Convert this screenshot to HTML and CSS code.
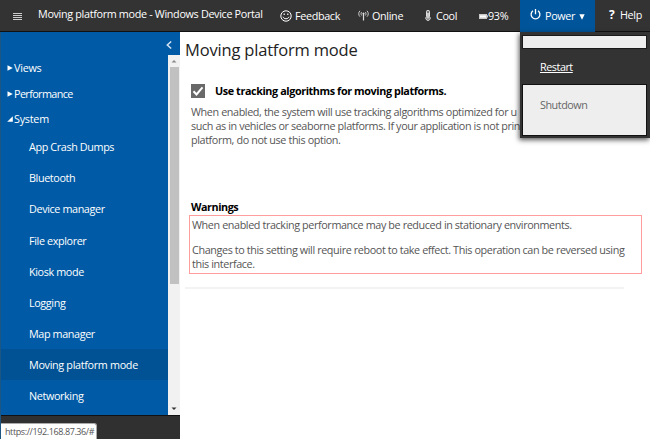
FILE: index.html
```html
<!DOCTYPE html>
<html lang="en">
<head>
<meta charset="utf-8">
<title>Moving platform mode - Windows Device Portal</title>
<link rel="stylesheet" href="styles.css">
</head>
<body>
<div class="app">
  <header class="topbar">
    <div class="burger"><i></i><i></i><i></i><i></i></div>
    <div class="title">Moving platform mode - Windows Device Portal</div>
    <div class="tool">
      <svg class="smile" width="12" height="12" viewBox="0 0 12 12" fill="none" stroke="#fff"><circle cx="6" cy="6" r="5.2"/><path d="M3 6.8c.8 2.6 5.2 2.6 6 0" /><path d="M4.2 3.6v1.4M7.8 3.6v1.4" stroke-width="1.2"/></svg>
      <span>Feedback</span>
    </div>
    <div class="tool">
      <svg class="antenna" width="11" height="11" viewBox="0 0 11 11" fill="none" stroke="#ddd" stroke-width=".9"><path d="M2 .8C.3 2.5.3 5 2 6.700M3.700 2C2.800 3 2.800 4.500 3.700 5.500M9 .8c1.700 1.700 1.700 4.200 0 5.900M7.300 2c.9 1 .9 2.500 0 3.500"/><path d="M5.500 4v6.500" stroke-width="1.200"/><circle cx="5.500" cy="3.700" r=".7" fill="#fff"/></svg>
      <span>Online</span>
    </div>
    <div class="tool">
      <svg class="thermo" width="6" height="11" viewBox="0 0 6 11"><path d="M1.500 1.700a1.500 1.500 0 0 1 3 0V6.600a2.200 2.200 0 1 1-3 0z" fill="#777" stroke="#eee" stroke-width=".9"/><path d="M3 3v5.500" stroke="#fff" stroke-width="1.200"/></svg>
      <span>Cool</span>
    </div>
    <div class="tool battery">
      <svg width="9" height="5" viewBox="0 0 9 5"><path d="M0 0h8v1.300h1v2.200H8V5H0z" fill="#c9c9c9"/><path d="M1 1.500h6v2H1z" fill="#fff"/></svg>
      <span>93%</span>
    </div>
    <div class="tool power">
      <svg class="onoff" width="11" height="11" viewBox="0 0 11 11" fill="none" stroke="#fff" stroke-width="1.300"><path d="M3 1.800a4.400 4.400 0 1 0 5 0M5.500 0v5.300"/></svg>
      <span>Power</span>
      <svg class="caret" width="6" height="6" viewBox="0 0 6 6"><path d="M.3.3h5.400L3 5.700z" fill="#fff"/></svg>
      <div class="menu">
        <div class="blank"></div>
        <a class="restart">Restart</a>
        <a class="shutdown">Shutdown</a>
      </div>
    </div>
    <div class="tool help"><b>?</b><span>Help</span></div>
  </header>
  <div class="body">
    <aside class="side">
      <div class="collapse"><svg width="6" height="8" viewBox="0 0 6 8"><path d="M5.200.5 1.300 4l3.900 3.500" fill="none" stroke="#d5e3f2" stroke-width="1.500"/></svg></div>
      <div class="pane">
        <nav class="nav">
          <div class="group"><svg width="6" height="6" viewBox="0 0 6 6"><path d="M.5.3 5.800 3 .5 5.700z" fill="#fff"/></svg><span>Views</span></div>
          <div class="group perf"><svg width="6" height="6" viewBox="0 0 6 6"><path d="M.5.3 5.800 3 .5 5.700z" fill="#fff"/></svg><span>Performance</span></div>
          <div class="group"><svg width="6" height="6" viewBox="0 0 6 6"><path d="M5.800.3v5.400H.2z" fill="#fff"/></svg><span>System</span></div>
          <a class="item">App Crash Dumps</a>
          <a class="item">Bluetooth</a>
          <a class="item">Device manager</a>
          <a class="item">File explorer</a>
          <a class="item">Kiosk mode</a>
          <a class="item">Logging</a>
          <a class="item">Map manager</a>
          <a class="item current">Moving platform mode</a>
          <a class="item">Networking</a>
        </nav>
        <div class="scroll">
          <svg width="12" height="12" viewBox="0 0 12 12"><path d="M3.500 7.500 6 5l2.500 2.500z" fill="#8a8a8a"/></svg>
          <div class="thumb"></div>
          <svg class="down" width="12" height="12" viewBox="0 0 12 12"><path d="M3.500 4.500h5L6 7z" fill="#333"/></svg>
        </div>
      </div>
      <div class="foot"><div class="status">https://192.168.87.36/#</div></div>
    </aside>
    <main class="main">
      <h1>Moving platform mode</h1>
      <div class="check">
        <svg width="14" height="14" viewBox="0 0 14 14"><path d="M0 0h14v14H0z" fill="#696969"/><path d="m2.500 7.300 3 3.200 6-7.200" fill="none" stroke="#fff" stroke-width="2"/></svg>
        <span>Use tracking algorithms for moving platforms.</span>
      </div>
      <p class="desc"><span>When enabled, the system will use tracking algorithms optimized for u</span><br><span>such as in vehicles or seaborne platforms. If your application is not prin</span><br><span>platform, do not use this option.</span></p>
      <h2><span>Warnings</span></h2>
      <div class="warn">
        <p><span>When enabled tracking performance may be reduced in stationary environments.</span></p>
        <p><span>Changes to this setting will require reboot to take effect. This operation can be reversed using</span><br><span>this interface.</span></p>
      </div>
      <hr>
    </main>
  </div>
</div>
</body>
</html>
```

FILE: styles.css
```css
* { box-sizing: border-box; }
body { margin: 0; background: #fff; font: 10.8px/14px "Open Sans", "Noto Sans", sans-serif; overflow: hidden; }
.app { width: 650px; height: 439px; display: flex; flex-direction: column; }
svg { display: block; flex: none; }

.topbar { height: 32px; flex: none; display: grid; grid-template-columns: 38px 242px 78px 67px 54px 41px 75px 55px; background: #333; border-bottom: 1px solid #111; color: #fff; white-space: nowrap; letter-spacing: -.34px; }
.burger { padding: 13px 0 0 13px; display: flex; flex-direction: column; gap: 1px; }
.burger i { width: 9px; height: 1px; background: #ccc; }
.title { padding-top: 7px; letter-spacing: -.33px; }
.tool { display: flex; align-items: flex-start; padding-top: 9px; }
.smile { margin: 1px 3px 0 0; }
.antenna { margin: 1px 3px 0 0; }
.thermo { margin: 1px 5px 0 0; }
.battery svg { margin: 5px 0 0; }
.power { background: #005499; height: 32px; padding-left: 10px; position: relative; }
.onoff { margin: 0 4px 0 0; }
.caret { margin: 5px 0 0 4px; }
.help { padding: 8px 0 0 14px; }
.help b { width: 11px; font-size: 12px; }

.menu { position: absolute; left: 0; top: 32px; width: 130px; height: 106px; background: #333; padding: 4px 3px 3px; display: flex; flex-direction: column; box-shadow: -1px 2px 5px rgba(0,0,0,.65); letter-spacing: -.46px; }
.blank { height: 12px; background: #eee; margin-right: 1px; box-shadow: 0 0 0 1px #1a1a1a; }
.restart { height: 37px; padding: 12px 17px 0; color: #fff; text-decoration: underline; }
.shutdown { height: 50px; margin-right: 1px; padding: 13px 17px 0; background: #eee; color: #666; box-shadow: 0 0 0 1px #111; }

.body { flex: 1; display: flex; min-height: 0; }
.side { width: 180px; flex: none; display: flex; flex-direction: column; background: #005aa5; border-left: 1px solid #1d5683; }
.collapse { height: 23px; padding: 9px 8px 0 0; display: flex; justify-content: flex-end; }
.pane { height: 361px; display: flex; }
.nav { flex: 1; color: #fff; letter-spacing: -.38px; white-space: nowrap; padding-top: .6px; }
.group { height: 25.400px; display: flex; align-items: center; gap: 1px; padding-left: 6px; letter-spacing: -.25px; }
.perf { letter-spacing: -.6px; }
.item { display: flex; align-items: center; height: 31.100px; padding-left: 28px; }
.current { background: #005294; letter-spacing: -.32px; }
.scroll { width: 12px; background: #f1f1f1; display: flex; flex-direction: column; }
.thumb { height: 217px; margin: 0 1px 0 2px; background: #c1c1c1; }
.down { margin-top: auto; }
.foot { flex: 1; background: #303030; border-top: 1px solid #111; padding-top: 7px; }
.status { width: 96px; height: 16px; background: #fff; border: 1px solid #aaa; border-left: 0; border-bottom: 0; border-radius: 0 3px 0 0; padding-left: 4px; color: #555; font-size: 9px; letter-spacing: -.4px; line-height: 15px; white-space: nowrap; }

.main { flex: 1; padding: 5px 8px 0 5px; color: #555; white-space: nowrap; letter-spacing: -.39px; }
h1 { margin: 0; font-size: 16.500px; line-height: 26px; font-weight: 400; color: #222; letter-spacing: -.18px; }
.check { display: flex; align-items: center; margin: 20px 0 0 6px; gap: 10px; height: 16px; color: #000; font-weight: 700; letter-spacing: -.4px; }
.desc { margin: 6px 0 0 6px; }
h2 { margin: 53px 0 0 6px; font-size: inherit; line-height: 14px; color: #000; letter-spacing: -.45px; }
.warn { border: 1px solid #ff9c9c; margin: 1px 0 0 4px; height: 59px; width: 453px; padding: 2px 0 0 2px; }
.warn p { margin: 0 0 11px; }
hr { width: 439px; height: 2px; border: 0; background: #f3f3f3; margin: 13px 0 0; }
```
